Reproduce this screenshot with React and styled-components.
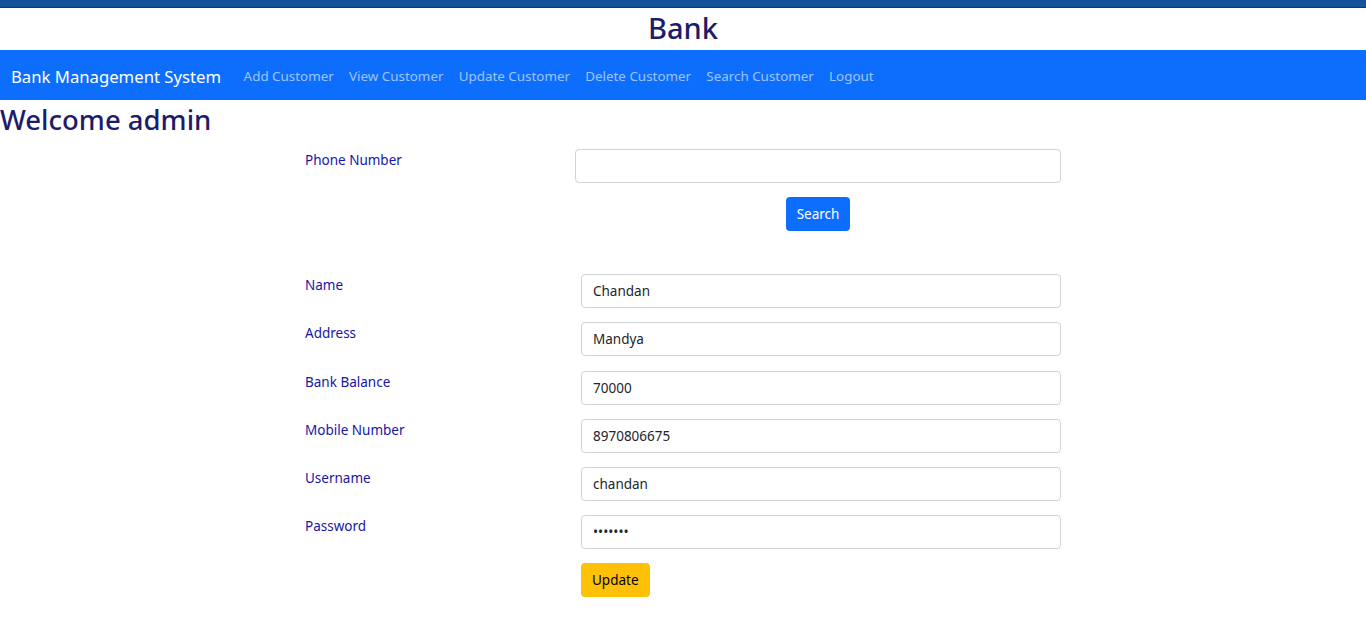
import React from 'react';
import styled, { createGlobalStyle } from 'styled-components';

const GlobalStyle = createGlobalStyle`
  body {
    margin: 0;
    font-family: "Noto Sans", "Open Sans", sans-serif;
    background: #fff;
  }
`;

const TopStrip = styled.div`
  height: 7px;
  background: #14539a;
  border-bottom: 1px solid #0b3a70;
`;

const Title = styled.h1`
  margin: 0;
  height: 42px;
  line-height: 40px;
  text-align: center;
  font-size: 29px;
  font-weight: 500;
  color: #1c1c6b;
`;

const Navbar = styled.nav`
  height: 50px;
  box-sizing: border-box;
  padding: 2px 11px 0;
  background: #0d6efd;
  display: flex;
  align-items: center;
`;

const Brand = styled.span`
  color: #fff;
  font-size: 16.7px;
  margin-right: 15px;
`;

const NavLink = styled.a`
  color: rgba(255, 255, 255, 0.6);
  font-size: 13.4px;
  padding: 0 7.6px;
  text-decoration: none;
`;

const Welcome = styled.h2`
  margin: 2px 0 0;
  font-size: 27.5px;
  font-weight: 500;
  line-height: 36px;
  color: #1c1c6b;
`;

const Form = styled.form`
  width: 756px;
  margin: ${p => p.$top}px 0 0 305px;
`;

const Row = styled.div`
  display: grid;
  grid-template-columns: ${p => p.$label}px 1fr;
  align-items: start;
  margin-bottom: ${p => (p.$gap === undefined ? 14.2 : p.$gap)}px;
`;

const Label = styled.label`
  font-size: 13.5px;
  color: #1616a6;
  padding-top: 2px;
`;

const Input = styled.input`
  box-sizing: border-box;
  width: 100%;
  height: 34px;
  border: 1px solid #ced4da;
  border-radius: 4px;
  padding: 0 11px;
  font-family: inherit;
  font-size: 13.5px;
  color: #212529;
  outline: none;
`;

const Actions = styled.div`
  display: flex;
  justify-content: ${p => (p.$center ? 'center' : 'flex-start')};
`;

const Button = styled.button`
  height: 34px;
  padding: 0 11px;
  border: none;
  border-radius: 4px;
  font-family: inherit;
  font-size: 13.5px;
  background: ${p => (p.$variant === 'warning' ? '#ffc107' : '#0d6efd')};
  color: ${p => (p.$variant === 'warning' ? '#000' : '#fff')};
`;

const links = ['Add Customer', 'View Customer', 'Update Customer', 'Delete Customer', 'Search Customer', 'Logout'];

const fields = [
  { label: 'Name', value: 'Chandan' },
  { label: 'Address', value: 'Mandya' },
  { label: 'Bank Balance', value: '70000' },
  { label: 'Mobile Number', value: '8970806675' },
  { label: 'Username', value: 'chandan' },
  { label: 'Password', value: 'chandan', type: 'password' },
];

const App = () => {
  return (
    <>
      <GlobalStyle />
      <TopStrip />
      <Title>Bank</Title>
      <Navbar>
        <Brand>Bank Management System</Brand>
        {links.map(l => (
          <NavLink key={l} href="#">{l}</NavLink>
        ))}
      </Navbar>
      <Welcome>Welcome admin</Welcome>

      <Form $top={11}>
        <Row $label={270}>
          <Label>Phone Number</Label>
          <Input defaultValue="" />
        </Row>
        <Row $label={270} $gap={0}>
          <span />
          <Actions $center>
            <Button type="button">Search</Button>
          </Actions>
        </Row>
      </Form>

      <Form $top={43}>
        {fields.map(f => (
          <Row key={f.label} $label={276}>
            <Label>{f.label}</Label>
            <Input type={f.type || 'text'} defaultValue={f.value} />
          </Row>
        ))}
        <Row $label={276}>
          <span />
          <Actions>
            <Button type="button" $variant="warning">Update</Button>
          </Actions>
        </Row>
      </Form>
    </>
  );
};

export default App;
